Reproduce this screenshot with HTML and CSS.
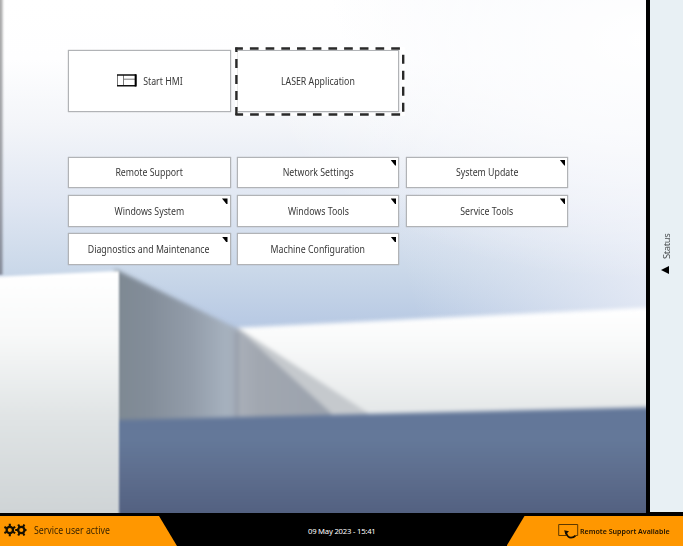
FILE: index.html
```html
<!DOCTYPE html>
<html lang="en">
<head>
<meta charset="utf-8">
<title>Service Home</title>
<link rel="stylesheet" href="styles.css">
</head>
<body>
<div class="screen">
  <div class="workspace">
    <main class="desktop">
      <svg class="wallpaper" viewBox="0 0 646 513" preserveAspectRatio="none" aria-hidden="true">
        <defs>
          <linearGradient id="sky" x1="0" y1="0" x2="0" y2="330" gradientUnits="userSpaceOnUse">
            <stop offset="0" stop-color="#fff"/><stop offset=".18" stop-color="#fefeff"/>
            <stop offset=".38" stop-color="#f3f5f9"/><stop offset=".62" stop-color="#dfe6f2"/>
            <stop offset=".82" stop-color="#cad8e9"/><stop offset="1" stop-color="#b6c8e3"/>
          </linearGradient>
          <radialGradient id="glow" cx="646" cy="40" r="400" gradientUnits="userSpaceOnUse" gradientTransform="translate(646 40) scale(1 .6) translate(-646 -40)">
            <stop offset="0" stop-color="#fff"/><stop offset=".4" stop-color="#fff" stop-opacity=".7"/><stop offset="1" stop-color="#fff" stop-opacity="0"/>
          </radialGradient>
          <linearGradient id="side" x1="390" y1="220" x2="650" y2="150" gradientUnits="userSpaceOnUse">
            <stop offset="0" stop-color="#eceff8" stop-opacity="0"/><stop offset="1" stop-color="#eceff8" stop-opacity=".9"/>
          </linearGradient>
          <linearGradient id="block" x1="0" y1="275" x2="0" y2="513" gradientUnits="userSpaceOnUse">
            <stop offset="0" stop-color="#fff"/><stop offset=".25" stop-color="#f8f9f9"/><stop offset=".6" stop-color="#e0e4e5"/><stop offset="1" stop-color="#cfd4d6"/>
          </linearGradient>
          <linearGradient id="wall" x1="119" y1="0" x2="238" y2="0" gradientUnits="userSpaceOnUse">
            <stop offset="0" stop-color="#7e8993"/><stop offset=".25" stop-color="#838d99"/><stop offset=".6" stop-color="#929ca9"/><stop offset=".9" stop-color="#a6b1be"/><stop offset="1" stop-color="#a3abb7"/>
          </linearGradient>
          <linearGradient id="beam" x1="0" y1="310" x2="0" y2="412" gradientUnits="userSpaceOnUse">
            <stop offset="0" stop-color="#fff"/><stop offset=".35" stop-color="#f8f9f9"/><stop offset="1" stop-color="#e5e8e9"/>
          </linearGradient>
          <linearGradient id="shade" x1="238" y1="0" x2="320" y2="0" gradientUnits="userSpaceOnUse">
            <stop offset="0" stop-color="#a9afb9"/><stop offset=".25" stop-color="#a1a7b0"/><stop offset="1" stop-color="#9ca3ae"/>
          </linearGradient>
          <linearGradient id="base" x1="0" y1="410" x2="0" y2="513" gradientUnits="userSpaceOnUse">
            <stop offset="0" stop-color="#637799"/><stop offset=".3" stop-color="#647899"/><stop offset=".65" stop-color="#5d6d8d"/><stop offset="1" stop-color="#536181"/>
          </linearGradient>
          <linearGradient id="edge" x1="0" y1="0" x2="0" y2="272" gradientUnits="userSpaceOnUse">
            <stop offset="0" stop-color="#aaa"/><stop offset=".7" stop-color="#999ca3"/><stop offset="1" stop-color="#858b99"/>
          </linearGradient>
          <filter id="soft" x="-10%" y="-10%" width="120%" height="120%" color-interpolation-filters="sRGB"><feGaussianBlur stdDeviation="2"/></filter>
          <filter id="fine" x="-10%" y="-10%" width="120%" height="120%" color-interpolation-filters="sRGB"><feGaussianBlur stdDeviation="1.3 1.8"/></filter>
          <filter id="edge-blur" x="-100%" y="-10%" width="300%" height="120%" color-interpolation-filters="sRGB"><feGaussianBlur stdDeviation="1.3"/></filter>
        </defs>
        <rect width="646" height="513" fill="url(#sky)"/>
        <rect x="300" width="346" height="400" fill="url(#side)"/>
        <rect width="646" height="513" fill="url(#glow)"/>
        <rect x="-8" y="-20" width="10.5" height="295" fill="url(#edge)" filter="url(#edge-blur)"/>
        <g filter="url(#soft)">
          <path d="M232 328L660 307V425H232Z" fill="url(#beam)"/>
          <path d="M238 328L368 413V430H238Z" fill="#c5c9cd"/>
          <path d="M236 327L331 413V430H236Z" fill="url(#shade)"/>
          <path d="M115 269L238 329V430H115Z" fill="url(#wall)"/>
          <path d="M237 332V420" stroke="#959ca8" stroke-width="3"/>
          <path d="M115 420L660 407V530H115Z" fill="url(#base)"/>
        </g>
        <path d="M-10 277L119 271V530H-10Z" fill="url(#block)" filter="url(#fine)"/>
      </svg>
      <nav class="primary">
        <button class="tile start">
          <svg class="hmi" viewBox="0 0 20 13"><path d="M.5 1V12M6.5 1V12M7 5.2H18" fill="none" stroke="#555" stroke-width=".8"/><path d="M0 1H19M0 11.8H19" stroke="#111" stroke-width="1.5"/><path d="M18.7 .3V12.5" stroke="#000" stroke-width="2.1"/></svg>
          <span>Start HMI</span>
        </button>
        <button class="tile focused"><span>LASER Application</span>
          <svg class="focus-ring" viewBox="0 0 170 69"><path d="M1.4 1.5H168.5V67.5H1.4Z" fill="none" stroke="#fff" stroke-width="2.6"/><path d="M.2 1.5H168" fill="none" stroke="#292929" stroke-width="2.4" stroke-dasharray="8.7 7" stroke-dashoffset="1"/><path d="M168.2 7.7V68" stroke="#292929" stroke-width="2.4" stroke-dasharray="9 7"/><path d="M1.4 .4V68" stroke="#292929" stroke-width="2.4" stroke-dasharray="9 7" stroke-dashoffset="4.5"/><path d="M.4 67.5H168" stroke="#292929" stroke-width="2.4" stroke-dasharray="8.7 7" stroke-dashoffset="1"/></svg>
        </button>
      </nav>
      <nav class="secondary">
        <button class="tile"><span>Remote Support</span></button>
        <button class="tile menu"><span>Network Settings</span></button>
        <button class="tile menu"><span>System Update</span></button>
        <button class="tile menu"><span>Windows System</span></button>
        <button class="tile menu"><span>Windows Tools</span></button>
        <button class="tile menu"><span>Service Tools</span></button>
        <button class="tile menu"><span>Diagnostics and Maintenance</span></button>
        <button class="tile menu"><span>Machine Configuration</span></button>
      </nav>
    </main>
    <aside class="status"><span class="status-label">Status</span><svg class="arrow" viewBox="0 0 8 8"><path d="M0 4L8 0V8Z"/></svg></aside>
  </div>
  <footer class="bar">
    <div class="user">
      <svg class="gears" viewBox="0 0 23 15"><g fill="none" stroke="#171000"><circle cx="5.8" cy="7" r="3.2" stroke-width="2.3"/><path d="M5.8 .8V4M5.8 10V13.2M.4 3.9L3.3 5.5M8.4 8.6L11.2 10.1M.4 10.1L3.3 8.6M8.4 5.5L11.2 3.9" stroke-width="2.1"/><circle cx="17.3" cy="7" r="3.2" stroke-width="2.3"/><path d="M11.2 7H14M20.5 7H22.5M14.2 1.6L15.8 4.4M18.8 9.6L20.4 12.4M20.4 1.6L18.8 4.4M15.8 9.6L14.2 12.4" stroke-width="2.1"/></g></svg>
      <span>Service user active</span>
    </div>
    <time class="clock">09 May 2023 - 15:41</time>
    <div class="remote">
      <svg class="screen-icon" viewBox="0 0 21 17"><path d="M8.8 12.5H.7V1.5H19.7V12.5H17.5" fill="none" stroke="#5d3900" stroke-width="1"/><path d="M6.2 7.2L11 8.2L7.4 11.8Z" fill="#150d00"/><path d="M8 9.5C9 13 11 14.7 13 14.7C15 14.7 16.5 13.8 17.5 12.6" fill="none" stroke="#150d00" stroke-width="1.7"/></svg>
      <span>Remote Support Available</span>
    </div>
  </footer>
</div>
</body>
</html>
```
FILE: styles.css
```css
* { box-sizing: border-box; }
body {
  margin: 0;
  font-family: "Noto Sans", "Open Sans", sans-serif;
  font-size: 10.2px;
  color: #383838;
}
.screen {
  width: 683px;
  height: 546px;
  display: grid;
  grid-template-rows: 513px 33px;
  background: #000;
  overflow: hidden;
}
.workspace { display: grid; grid-template-columns: 646px 34px; gap: 3.5px; }
.desktop {
  position: relative;
  padding: 49.7px 0 0 67.5px;
  overflow: hidden;
}
.wallpaper { position: absolute; inset: 0; width: 646px; height: 513px; }
.primary, .secondary {
  position: relative;
  display: grid;
  grid-template-columns: 163px 162px 162.5px;
  column-gap: 6.7px;
}
.primary { grid-auto-rows: 62px; }
.secondary { grid-auto-rows: 31.8px; row-gap: 6.5px; margin-top: 44.9px; }
.tile {
  position: relative;
  display: flex;
  align-items: center;
  justify-content: center;
  margin: 0;
  padding: 0;
  border: 1px solid #b1b3b6;
  background: #fff;
  box-shadow: 0 0 1px #888b;
  font: inherit;
  color: inherit;
  white-space: nowrap;
}
.tile span { transform: scaleX(.862); }
.start { gap: 3px; padding-left: 4px; }
.menu::after {
  content: "";
  position: absolute;
  top: 2.5px;
  right: 2px;
  width: 5.5px;
  height: 5.5px;
  background: #000;
  clip-path: polygon(0 0, 100% 0, 100% 100%, 80% 100%);
}
.hmi { width: 20px; height: 13px; }
.focus-ring { position: absolute; left: -3px; top: -4px; width: 170px; height: 69px; }
.status {
  height: 512px;
  padding-top: 232.5px;
  background: #e8f0f4;
  display: flex;
  flex-direction: column;
  align-items: center;
  gap: 7px;
}
.status-label {
  height: 26px;
  writing-mode: vertical-rl;
  transform: rotate(180deg);
  font-size: 9.5px;
  line-height: 14px;
  letter-spacing: -.4px;
  color: #4c5052;
}
.arrow { width: 8px; height: 8px; margin-right: 4px; }
.bar {
  display: grid;
  grid-template-columns: 177px 1fr 177px;
  padding-top: 3px;
}
.user, .remote { display: flex; align-items: center; background: #ff9700; color: #3d2600; }
.user {
  gap: 7px;
  padding-left: 4px;
  clip-path: polygon(0 0, 159px 0, 100% 100%, 0 100%);
}
.user span { transform: scaleX(.86); transform-origin: left; margin-top: -2px; white-space: nowrap; }
.gears { width: 23px; height: 15px; margin-top: -2px; flex: none; }
.clock {
  align-self: center;
  justify-self: center;
  color: #fff;
  font-size: 7.7px;
  letter-spacing: -.22px;
}
.remote {
  padding-left: 51.5px;
  gap: 1px;
  clip-path: polygon(18px 0, 100% 0, 100% 100%, 0 100%);
  font-size: 7.7px;
  font-weight: 600;
  color: #211400;
  white-space: nowrap;
}
.remote span { transform: scaleX(.92); transform-origin: left; }
.screen-icon { width: 21px; height: 17px; flex: none; }
```
